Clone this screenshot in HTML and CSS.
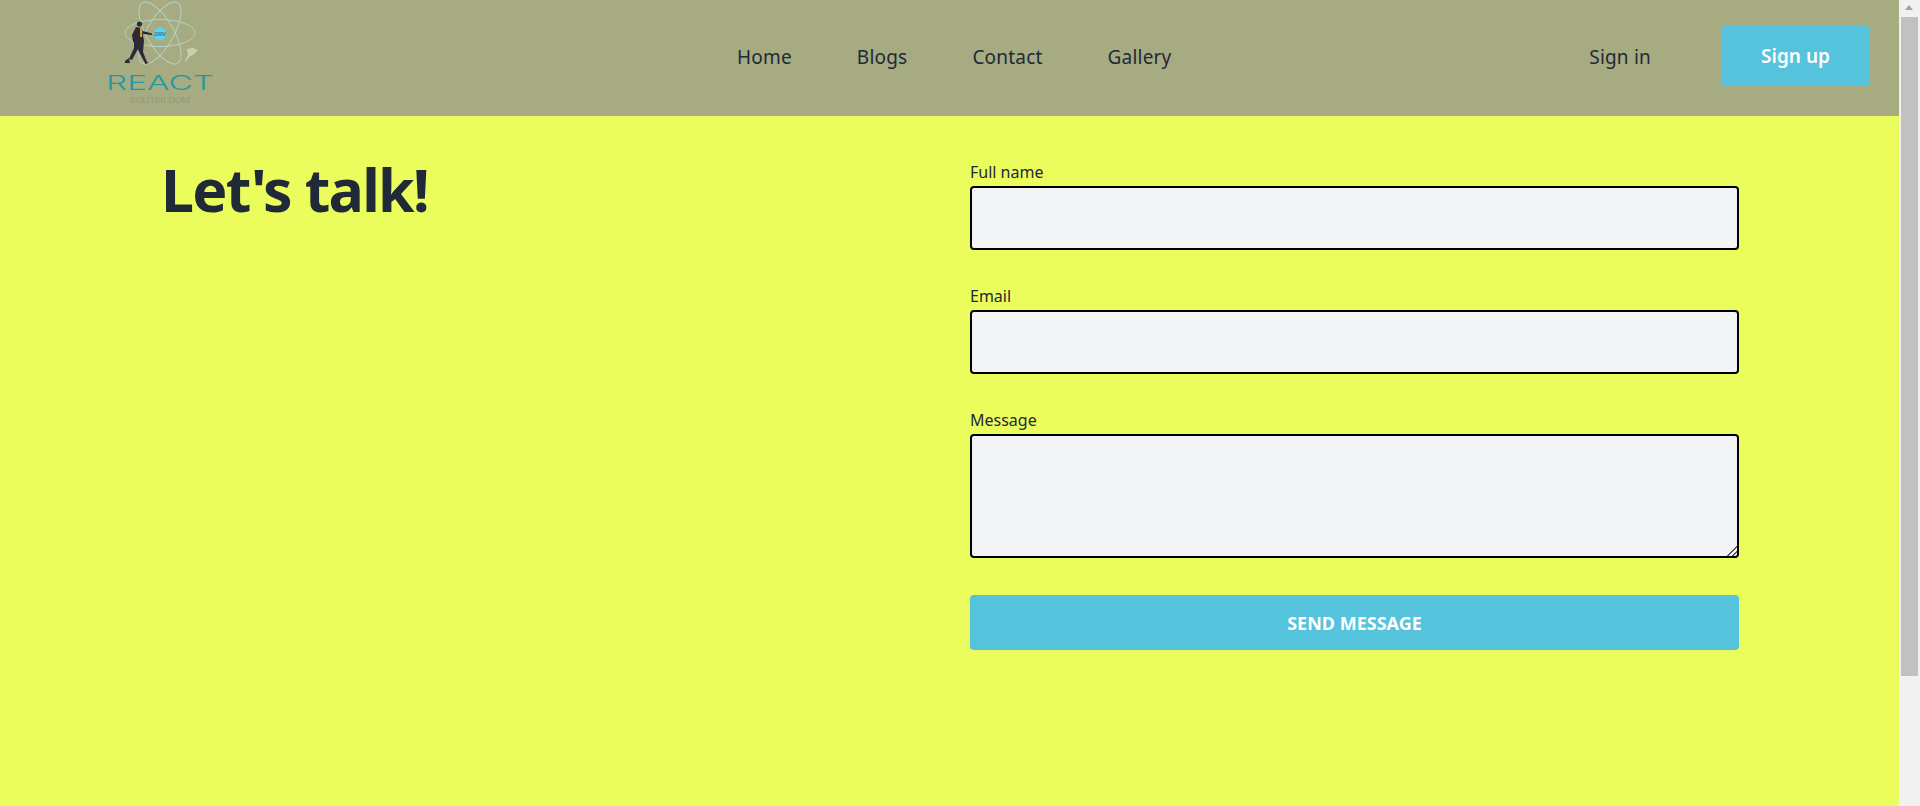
FILE: index.html
```html
<!DOCTYPE html>
<html lang="en">
<head>
<meta charset="utf-8">
<title>Let's talk!</title>
<link rel="stylesheet" href="styles.css">
</head>
<body>
<div class="page">
	<header class="topbar">
		<a class="logo" href="#">
			<svg width="150" height="116" viewBox="0 0 150 116">
				<g fill="none" stroke="#b3d3c4" stroke-width="1">
					<ellipse cx="70" cy="33" rx="35" ry="13.5"/>
					<ellipse cx="70" cy="33" rx="35" ry="13.5" transform="rotate(60 70 33)"/>
					<ellipse cx="70" cy="33" rx="35" ry="13.5" transform="rotate(120 70 33)"/>
				</g>
				<circle cx="70" cy="34" r="6.5" fill="#5fd0ee"/>
				<text x="70" y="36" class="logo-badge" text-anchor="middle">DRM</text>
				<!-- walking figure -->
				<circle cx="49.5" cy="24" r="2.6" fill="#2d2a38"/>
				<path d="M46 27 L52 28 L54 41 L43 42 L42 35 Z" fill="#2d2a38"/>
				<path d="M50 28 L52 28 L52 37 L50 37 Z" fill="#d9a21e"/>
				<path d="M53 31 L62 33.5 L62 35 L53 34 Z" fill="#2d2a38"/>
				<path d="M44 41 L54 41 L53 52 L57 62 L55 63 L49 52 L48 49 L42 60 L39 59 L44 48 Z" fill="#2d2a38"/>
				<path d="M35 61 L39 58 L40 63 L35 63 Z M55 61 L59 63 L55 64 Z" fill="#2d2a38"/>
				<!-- small plant thing -->
				<path d="M95 61 L98 55 L97 49 L103 48 L108 50 L103 55 L99 57 L96 62 Z" fill="#c6cfb2"/>
				<text x="16" y="90" class="logo-title" textLength="108" lengthAdjust="spacingAndGlyphs">REACT</text>
				<text x="40" y="103" class="logo-sub" textLength="60" lengthAdjust="spacingAndGlyphs">ROUTER DOM</text>
			</svg>
		</a>
		<nav class="main-nav">
			<a href="#">Home</a>
			<a href="#">Blogs</a>
			<a href="#">Contact</a>
			<a href="#">Gallery</a>
		</nav>
		<div class="auth">
			<a href="#" class="sign-in">Sign in</a>
			<a href="#" class="sign-up">Sign up</a>
		</div>
	</header>

	<main class="content">
		<h1>Let's talk!</h1>
		<form class="contact-form">
			<div class="field">
				<label for="full-name">Full name</label>
				<input type="text" id="full-name" name="full-name">
			</div>
			<div class="field">
				<label for="email">Email</label>
				<input type="text" id="email" name="email">
			</div>
			<div class="field">
				<label for="message">Message</label>
				<textarea id="message" name="message"></textarea>
			</div>
			<button type="submit" class="send-btn">SEND MESSAGE</button>
		</form>
	</main>
</div>

<div class="scrollbar">
	<div class="scroll-arrow"></div>
	<div class="scroll-thumb"></div>
</div>
</body>
</html>
```

FILE: styles.css
```css
* {
	box-sizing: border-box;
}

html, body {
	height: 100%;
}

body {
	margin: 0;
	display: flex;
	overflow: hidden;
	font-family: "Noto Sans", Arial, sans-serif;
	background-color: #f1f1f1;
	color: #1f2937;
}

a {
	text-decoration: none;
	color: #1f2937;
}

.page {
	flex: 1;
	display: flex;
	flex-direction: column;
	background-color: #ebfd5c;
	border-bottom-right-radius: 3px;
}

.topbar {
	height: 116px;
	display: flex;
	align-items: center;
	padding-left: 90px;
	padding-bottom: 4px;
	background-color: #a6ab82;
}

.logo {
	align-self: flex-start;
	width: 150px;
	height: 116px;
}

.logo-badge {
	font-family: "Liberation Sans", sans-serif;
	font-size: 5px;
	font-style: italic;
	fill: #275a7a;
}

.logo-title {
	font-family: Inter, sans-serif;
	font-size: 20px;
	font-weight: 300;
	fill: #1f9aa3;
}

.logo-sub {
	font-family: Inter, sans-serif;
	font-size: 7px;
	font-weight: 200;
	fill: #7d8578;
}

.main-nav {
	display: flex;
	gap: 65px;
	margin-left: 497px;
	padding-top: 2px;
}

.main-nav a, .sign-in {
	font-size: 19px;
	font-weight: 400;
	letter-spacing: 0.2px;
}

.auth {
	display: flex;
	align-items: center;
	margin-left: auto;
	margin-right: 29px;
}

.sign-in {
	padding-top: 2px;
}

.sign-up {
	width: 149px;
	height: 60px;
	margin-left: 70px;
	display: flex;
	align-items: center;
	justify-content: center;
	font-size: 19px;
	font-weight: 600;
	color: #fff;
	background-color: #56c3dc;
	border-radius: 4px;
}

.content {
	display: flex;
	padding: 46px 0 0 161px;
}

h1 {
	width: 809px;
	margin: -9px 0 0;
	font-size: 59px;
	font-weight: 700;
	line-height: 72px;
	letter-spacing: -1.7px;
}

.contact-form {
	width: 769px;
	display: flex;
	flex-direction: column;
}

.field {
	display: flex;
	flex-direction: column;
	margin-bottom: 36px;
}

.field label {
	height: 24px;
	line-height: 20px;
	font-size: 16px;
}

.field input, .field textarea {
	display: block;
	width: 100%;
	height: 64px;
	border: 2px solid #000;
	border-radius: 4px;
	background-color: #f3f4f6;
}

.field textarea {
	height: 124px;
}

.field textarea::-webkit-resizer {
	background: linear-gradient(135deg, transparent 65%, #555 65%, #555 71%, transparent 71%, transparent 82%, #555 82%, #555 88%, transparent 88%);
}

.send-btn {
	height: 55px;
	margin-top: 1px;
	border: none;
	border-radius: 4px;
	font-family: inherit;
	font-size: 18px;
	font-weight: 700;
	color: #fff;
	background-color: #56c3dc;
}

.scrollbar {
	width: 21px;
	padding-left: 2px;
	padding-right: 2px;
}

.scroll-arrow {
	height: 17px;
	position: relative;
}

.scroll-arrow::after {
	content: "";
	position: absolute;
	left: 4px;
	top: 5px;
	border-left: 4.5px solid transparent;
	border-right: 4.5px solid transparent;
	border-bottom: 5px solid #a3a3a3;
}

.scroll-thumb {
	height: 659px;
	background-color: #c1c1c1;
}
```
